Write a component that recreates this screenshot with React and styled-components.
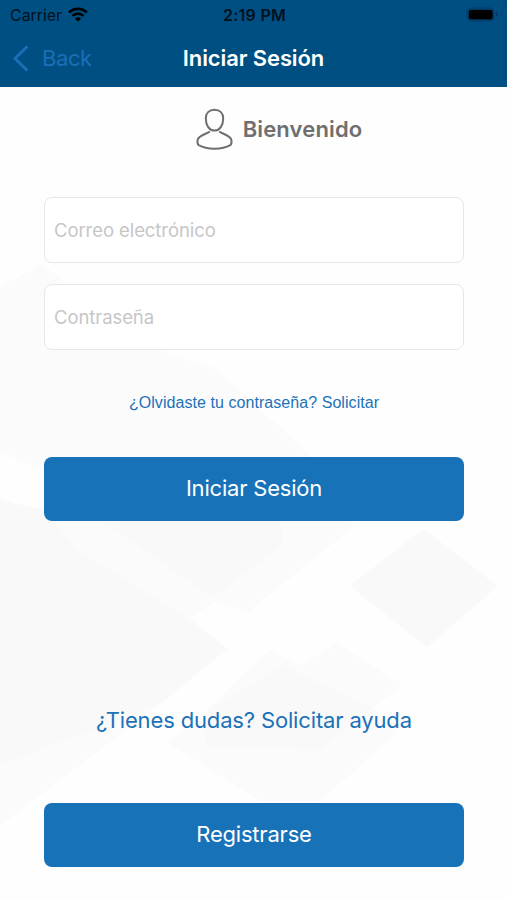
import React, { useState } from 'react';
import styled, { createGlobalStyle } from 'styled-components';

const GlobalStyle = createGlobalStyle`
  * {
    box-sizing: border-box;
  }

  body {
    margin: 0;
    background: #fff;
    font-family: 'Inter', 'Liberation Sans', sans-serif;
  }
`;

const Screen = styled.div`
  position: relative;
  display: flex;
  flex-direction: column;
  width: 507px;
  height: 900px;
  overflow: hidden;
  background: #fefefe;
`;

const Backdrop = styled.svg`
  position: absolute;
  top: 0;
  left: 0;
  width: 507px;
  height: 900px;
`;

const Header = styled.header`
  position: relative;
  height: 87px;
  background: #004f83;
`;

const StatusBar = styled.div`
  display: grid;
  grid-template-columns: 1fr auto 1fr;
  align-items: center;
  height: 29px;
  padding: 0 8px 0 10px;
  color: #02111d;
  font-size: 16px;
`;

const Carrier = styled.div`
  display: flex;
  align-items: center;
  gap: 6px;
  letter-spacing: -0.05px;
`;

const Clock = styled.div`
  font-weight: 600;
  letter-spacing: 0.25px;
`;

const BatteryIcon = styled.svg`
  justify-self: end;
`;

const NavBar = styled.nav`
  display: grid;
  grid-template-columns: 1fr auto 1fr;
  align-items: center;
  height: 58px;
  padding: 0 13px;
`;

const BackButton = styled.button`
  display: flex;
  align-items: center;
  justify-self: start;
  gap: 13px;
  padding: 0;
  border: 0;
  background: none;
  color: #1a6fb8;
  font-family: inherit;
  font-size: 22px;
  letter-spacing: -0.4px;
`;

const Title = styled.h1`
  margin: 0;
  color: #fff;
  font-size: 22px;
  font-weight: 600;
  letter-spacing: -0.1px;
`;

const Form = styled.main`
  position: relative;
  display: flex;
  flex-direction: column;
  flex: 1;
  padding: 0 43px 0 44px;
`;

const Welcome = styled.div`
  display: flex;
  align-items: center;
  justify-content: center;
  gap: 10px;
  height: 84px;
  margin: 0 0 26px 50px;
  color: #6f6f6f;
  font-size: 22px;
  font-weight: 600;
  letter-spacing: 0.15px;
`;

const Input = styled.input`
  width: 420px;
  height: 66px;
  margin-bottom: 20.5px;
  padding: 0 9px;
  border: 1.5px solid #e6e6e6;
  border-radius: 8px;
  outline: none;
  background: #fff;
  font-family: inherit;
  font-size: 18.5px;

  &::placeholder {
    color: #c6c6c8;
    letter-spacing: -0.08px;
    opacity: 1;
  }
`;

const Link = styled.a`
  align-self: center;
  color: #1b72b8;
  line-height: 30px;
`;

const ForgotLink = styled(Link)`
  margin: 18px 0 39px;
  font-family: 'Liberation Sans', Arial, sans-serif;
  font-size: 16px;
  letter-spacing: 0.06px;
`;

const HelpLink = styled(Link)`
  margin: 184px 0 68px;
  font-size: 22px;
  letter-spacing: -0.15px;
`;

const Button = styled.button`
  width: 420px;
  height: 64px;
  padding: 0 0 2px;
  border: 0;
  border-radius: 8px;
  background: #1872b8;
  color: #fff;
  font-family: inherit;
  font-size: 22px;
  letter-spacing: -0.2px;
`;

// faint overlapping slabs behind the form
const Background = () => (
  <Backdrop viewBox="0 0 507 900" aria-hidden="true">
    <polygon
      fill="#fbfbfb"
      points="0,287 42,264 100,310 167,354 215,368 303,448 353,527 247,613 217,601 190,618 227,649 160,704 0,826 0,497 30,510 44,506 60,480 0,451"
    />
    <polygon fill="#f9f9f9" points="0,500 44,510 77,550 187,618 227,649 160,704 0,765" />
    <polygon fill="#f9f9f9" points="105,521 280,521 283,544 213,598 130,540" />
    <polygon fill="#f9f9f9" points="350,586 423,529 498,586 427,647" />
    <polygon
      fill="#fbfbfb"
      points="167,742 210,708 270,649 300,666 337,643 403,685 373,708 397,733 320,801 260,801"
    />
    <polygon fill="#f9f9f9" points="210,708 283,666 373,708 320,750 205,745" opacity="0.6" />
  </Backdrop>
);

const Wifi = () => (
  <svg width="20" height="15" viewBox="0 0 21 15" fill="none" stroke="#000">
    <path d="M1.3 5.400a13 13 0 0 1 18.400 0" strokeWidth="3" />
    <path d="M4.700 9a8.200 8.200 0 0 1 11.600 0" strokeWidth="2.700" />
    <path d="M7.300 11.700a4.500 4.500 0 0 1 6.400 0L10.500 15z" fill="#000" stroke="none" />
  </svg>
);

const Battery = () => (
  <BatteryIcon width="33" height="15" viewBox="0 0 33 15">
    <rect x="1" y="1" width="27" height="13" rx="4" fill="none" stroke="#003761" />
    <rect x="2.7" y="2.7" width="24" height="9.8" rx="2.2" fill="#000" />
    <path d="M30 5v5c2-.8 2-4.2 0-5z" fill="#003761" />
  </BatteryIcon>
);

const Chevron = () => (
  <svg width="16" height="27" viewBox="0 0 16 27" fill="none">
    <path d="M14.3 1.5 2 13.5l12.3 12" stroke="currentColor" strokeWidth="2.8" />
  </svg>
);

const Person = () => (
  <svg width="37" height="42" viewBox="0 0 37 42" fill="none" stroke="currentColor" strokeWidth="2">
    <path d="M18.500 1.800C13 1.800 9.800 5.300 9.800 10.500c0 6.800 3.500 12 8.700 12s8.700-5.200 8.700-12c0-5.200-3.200-8.700-8.700-8.700z" />
    <path d="M13.800 23.400c-3.300 3-11.800 3.600-12.300 9.200-.2 3-.2 3.700 1.200 4.600 8 4.700 23.600 4.700 31.600 0 1.400-.9 1.400-1.600 1.200-4.600-.5-5.600-9-6.200-12.300-9.200" />
  </svg>
);

export default function App() {
  const [email, setEmail] = useState('');
  const [password, setPassword] = useState('');

  return (
    <Screen>
      <GlobalStyle />
      <Background />
      <Header>
        <StatusBar>
          <Carrier>
            Carrier
            <Wifi />
          </Carrier>
          <Clock>2:19 PM</Clock>
          <Battery />
        </StatusBar>
        <NavBar>
          <BackButton>
            <Chevron />
            Back
          </BackButton>
          <Title>Iniciar Sesión</Title>
        </NavBar>
      </Header>
      <Form>
        <Welcome>
          <Person />
          Bienvenido
        </Welcome>
        <Input
          type="email"
          placeholder="Correo electrónico"
          value={email}
          onChange={e => setEmail(e.target.value)}
        />
        <Input
          type="password"
          placeholder="Contraseña"
          value={password}
          onChange={e => setPassword(e.target.value)}
        />
        <ForgotLink>¿Olvidaste tu contraseña? Solicitar</ForgotLink>
        <Button>Iniciar Sesión</Button>
        <HelpLink>¿Tienes dudas? Solicitar ayuda</HelpLink>
        <Button>Registrarse</Button>
      </Form>
    </Screen>
  );
}
